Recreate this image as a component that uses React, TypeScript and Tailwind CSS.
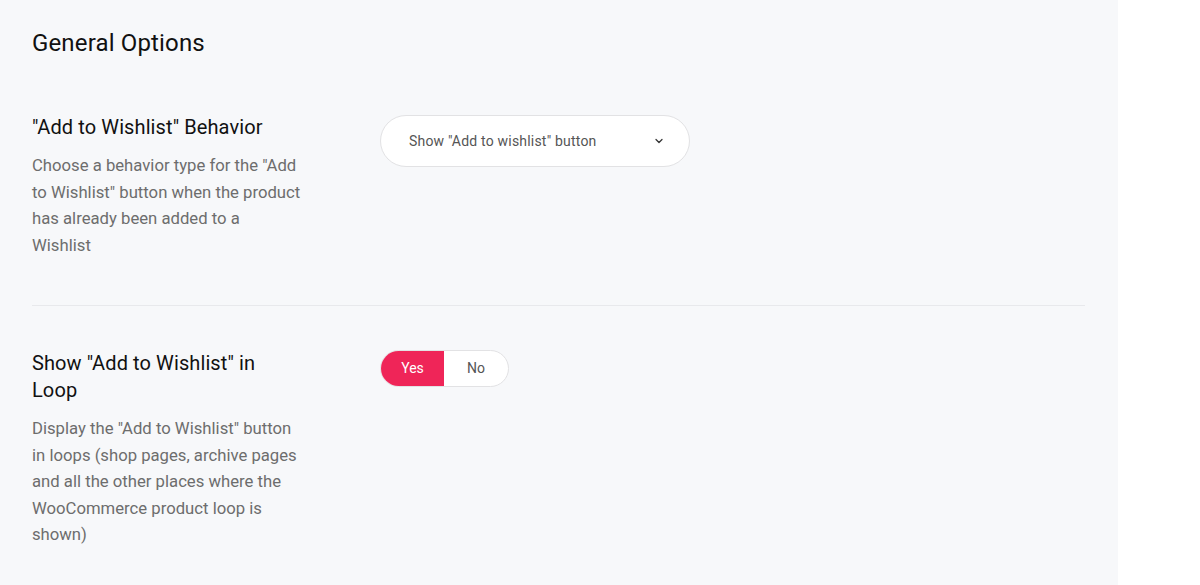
import { ChevronDown } from "lucide-react"

const font = { fontFamily: "Roboto, 'Liberation Sans', sans-serif" }

function Label({ title, body }: { title: string; body: string }) {
  return (
    <div className="w-[269px] shrink-0">
      <h3 className="text-[20px] leading-[27px] tracking-[0.1px] text-[#111]">{title}</h3>
      <p className="mt-[12px] text-[16.7px] leading-[26.5px] text-[#6d6d6d]">{body}</p>
    </div>
  )
}

export default function App() {
  return (
    <div className="flex h-[585px] w-[1200px] bg-white" style={font}>
      <main className="w-[1118px] bg-[#f7f8fa] px-8">
        <h1 className="pt-[27px] text-[24px] leading-8 tracking-[0.15px] text-[#111]">General Options</h1>

        <section className="flex gap-[79px] pt-[55px] pb-[46px]">
          <Label
            title={'"Add to Wishlist" Behavior'}
            body={'Choose a behavior type for the "Add to Wishlist" button when the product has already been added to a Wishlist'}
          />
          <div className="pt-[1px]">
            <button className="flex h-[52px] w-[310px] items-center justify-between rounded-full border border-[#e2e2e4] bg-white pr-6 pl-7 text-[14px] tracking-[0.2px] text-[#555]">
              <span>Show "Add to wishlist" button</span>
              <ChevronDown size={12} strokeWidth={2.5} className="text-[#333]" />
            </button>
          </div>
        </section>

        <div className="mr-[1px] h-px bg-[#e8e9ec]" />

        <section className="flex gap-[79px] pt-[44px]">
          <Label
            title={'Show "Add to Wishlist" in Loop'}
            body={'Display the "Add to Wishlist" button in loops (shop pages, archive pages and all the other places where the WooCommerce product loop is shown)'}
          />
          <div>
            <div className="flex h-[37px] overflow-hidden rounded-full border border-[#e2e2e4] bg-white text-[14px]">
              <span className="flex w-[63px] items-center justify-center bg-[#ef2558] text-white">Yes</span>
              <span className="flex w-[64px] items-center justify-center text-[#555]">No</span>
            </div>
          </div>
        </section>
      </main>
    </div>
  )
}
